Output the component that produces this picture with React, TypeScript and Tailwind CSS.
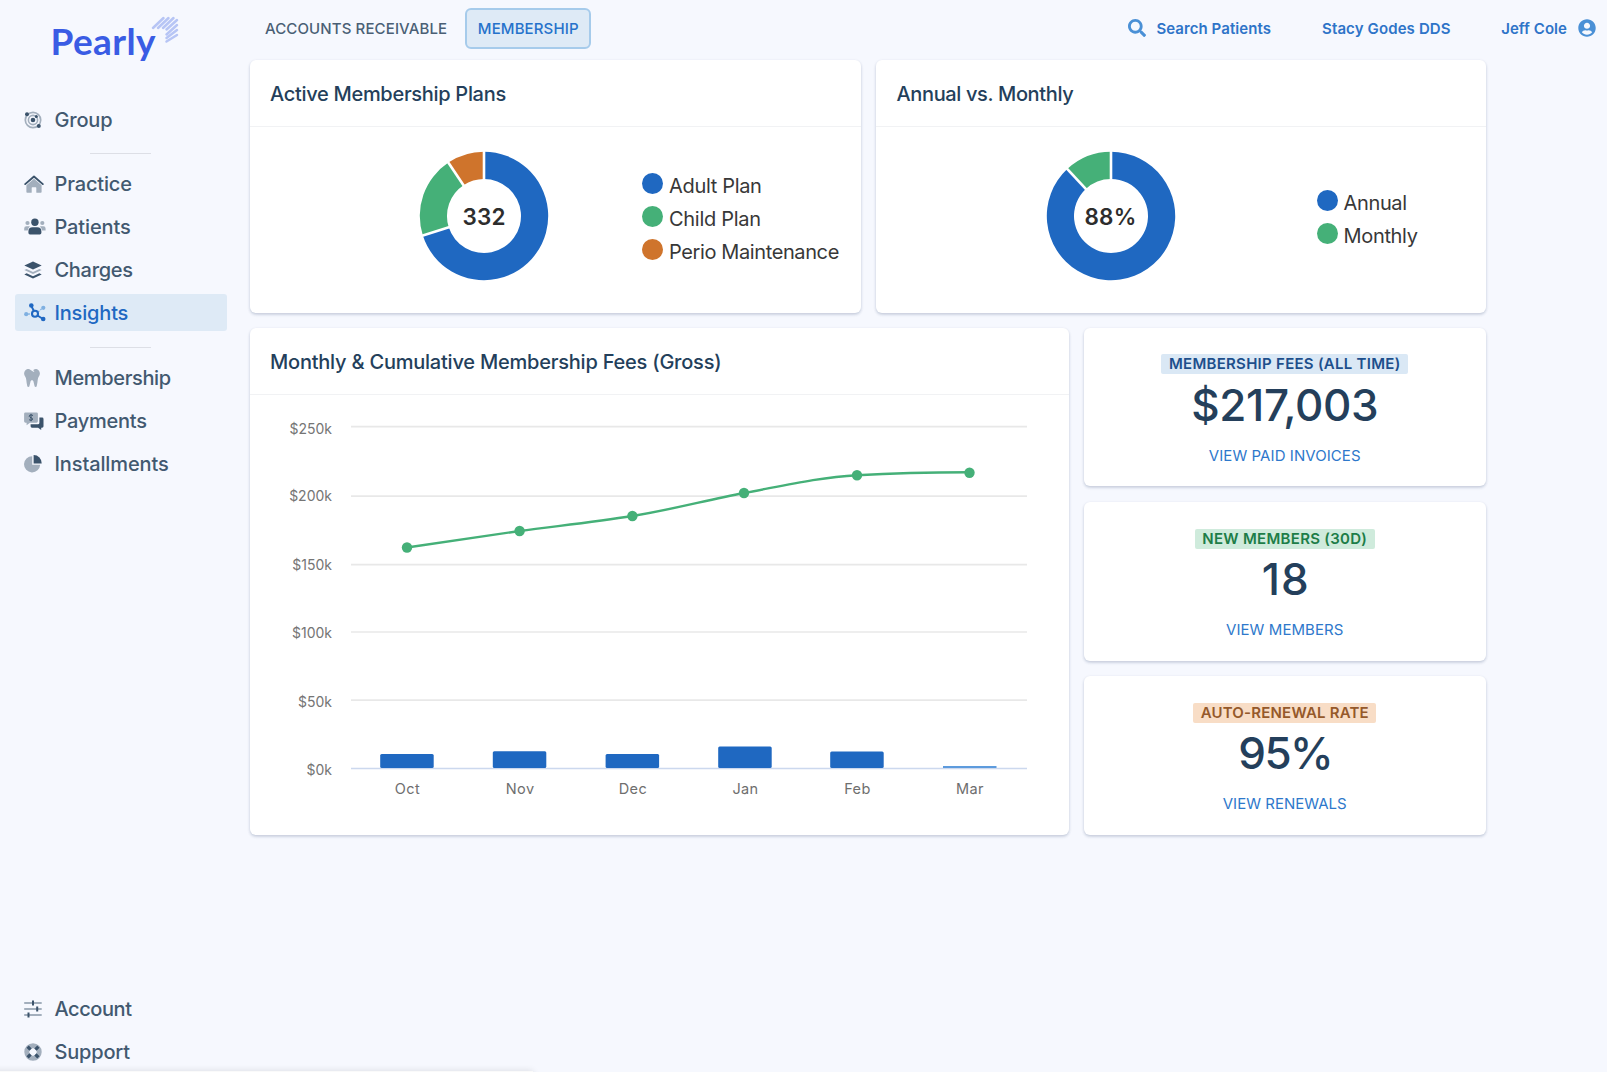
import type { ReactNode } from "react";
import { FaSearch, FaTooth, FaUserCircle } from "react-icons/fa";

const DARK = "#3b536b";
const SOFT = "#a3afbd";

function GroupIcon() {
  return (
    <svg width="18" height="18" viewBox="0 0 18 18" fill="none">
      <circle cx="9" cy="9" r="7.700" stroke={SOFT} strokeWidth="1.700" />
      <circle cx="9" cy="9" r="4.600" stroke={SOFT} strokeWidth="1.600" />
      <circle cx="9" cy="9" r="2.300" fill={DARK} />
      <circle cx="3" cy="3.200" r="2" fill={DARK} />
      <circle cx="12.300" cy="5.600" r="1.500" fill={DARK} />
      <circle cx="14.800" cy="15" r="2" fill={DARK} />
    </svg>
  );
}

function HomeIcon() {
  return (
    <svg width="20" height="18" viewBox="0 0 20 18" fill="none">
      <path d="M10 3.800 2.400 10.200V17q0 .8.8.8h3.900q.6 0 .6-.6v-4.400q0-.6.6-.6h3.400q.6 0 .6.6v4.400q0 .6.6.6h3.900q.8 0 .8-.8v-6.800Z" fill={SOFT} />
      <path d="M1.200 9.100 10 1.500l8.800 7.600" stroke={DARK} strokeWidth="1.900" strokeLinecap="round" strokeLinejoin="round" />
    </svg>
  );
}

function PeopleIcon() {
  return (
    <svg width="22" height="17" viewBox="0 0 22 17">
      <g fill={SOFT}>
        <circle cx="3.500" cy="5" r="2.100" />
        <circle cx="18.300" cy="5" r="2.100" />
        <path d="M.2 12.600V10.400q0-2.200 2.200-2.200h2.200q.8 0 1.400.4-2 1.300-2.300 4Z" />
        <path d="M21.600 12.600V10.400q0-2.200-2.200-2.200h-2.200q-.8 0-1.400.4 2 1.300 2.300 4Z" />
      </g>
      <g fill={DARK}>
        <circle cx="10.900" cy="4.300" r="3.700" />
        <path d="M4.400 14.800v-1.400q0-4.200 4.200-4.200h4.600q4.200 0 4.200 4.200v1.400q0 1.600-1.600 1.600H6q-1.600 0-1.600-1.600Z" />
      </g>
    </svg>
  );
}

function LayersIcon() {
  return (
    <svg width="18" height="18" viewBox="0 0 18 18">
      <path d="M.3 4.500 9 .4l8.700 4.100L9 8.600Z" fill={DARK} />
      <path d="m.3 9 2.300-1.100L9 10.900l6.400-3L17.700 9 9 13.100Z" fill={SOFT} />
      <path d="m.3 13.400 2.300-1.100L9 15.300l6.400-3 2.300 1.100L9 17.500Z" fill={DARK} />
    </svg>
  );
}

function InsightsIcon() {
  return (
    <svg width="22" height="19" viewBox="0 0 22 19" fill="none">
      <path d="M4 11h4M14 9l4-3.600" stroke="#8db9e5" strokeWidth="1.300" strokeDasharray="2 1" />
      <circle cx="2.200" cy="11.200" r="2.100" fill="#7fb0e1" />
      <circle cx="19.300" cy="4.800" r="2.100" fill="#7fb0e1" />
      <path d="m7.300 3 2.800 5.200M13.500 12.500l5.500 3.500" stroke="#2068c2" strokeWidth="1.900" />
      <circle cx="7.300" cy="2.500" r="2.300" fill="#2068c2" />
      <circle cx="19.200" cy="16" r="2.300" fill="#2068c2" />
      <circle cx="11" cy="10.800" r="3" stroke="#2068c2" strokeWidth="2.100" />
    </svg>
  );
}

function PaymentsIcon() {
  return (
    <svg width="20" height="18" viewBox="0 0 20 18">
      <path d="M1.500.4h11q1.400 0 1.400 1.400v7.500q0 1.400-1.400 1.400H6L2.600 13.200V10.700H1.500Q.1 10.700.1 9.300V1.800Q.1.400 1.500.4Z" fill={SOFT} />
      <path d="M15.400 5.600h2.700q1.400 0 1.400 1.400v7.300q0 1.400-1.400 1.400h-.9v2.200l-3.100-2.200H8q-1.400 0-1.400-1.400v-2.100h7.300q1.500 0 1.500-1.500Z" fill={DARK} />
      <path d="M9 3.500Q7 2.400 5.600 3.300q-1 1.100.4 1.900l1.800.8q1.400 1 .3 2-1.400.8-3-.3M7 1.900v7.300" stroke={DARK} strokeWidth="1" fill="none" />
    </svg>
  );
}

function PieIcon() {
  return (
    <svg width="18" height="18" viewBox="0 0 18 18">
      <path d="M8.200 1.200v8.600h8A8.100 8.100 0 1 1 8.200 1.200Z" fill={SOFT} />
      <path d="M9.600.1a8.100 8.100 0 0 1 8.100 8.300H9.600Z" fill={DARK} />
    </svg>
  );
}

function SlidersIcon() {
  return (
    <svg width="18" height="18" viewBox="0 0 18 18" strokeWidth="2">
      <path d="M.2 3h17.500M.2 9h17.500M.2 15h17.500" stroke={SOFT} />
      <path d="M9 .6v4.900M13.200 6.600v4.900M4.500 12.500v4.900" stroke={DARK} />
    </svg>
  );
}

function SupportIcon() {
  return (
    <svg width="18" height="18" viewBox="0 0 18 18" fill="none">
      <circle cx="9" cy="9" r="6.200" stroke={SOFT} strokeWidth="5" />
      <path d="m3.600 3.600 3 3m4.800 4.800 3 3m0-10.800-3 3m-4.800 4.800-3 3" stroke={DARK} strokeWidth="3.200" />
    </svg>
  );
}

type NavEntry = { label: string; icon: ReactNode; tracking: string; active?: boolean };

function NavItem({ label, icon, tracking, active }: NavEntry) {
  return (
    <a
      className={`flex h-[37px] items-center rounded-[3px] pl-[9px] text-[20px] font-medium ${
        active ? "bg-[#deeaf6] text-[#2068c2]" : "text-[#425970]"
      }`}
    >
      <span className="flex w-[30.500px] shrink-0">{icon}</span>
      <span className={tracking}>{label}</span>
    </a>
  );
}

function Divider() {
  return <div className="ml-[75px] h-px w-[61px] bg-[#dddfe6]" />;
}

function Logo() {
  return (
    <div className="ml-[35.500px] mt-[16px] flex h-[50px] items-start">
      <span className="mt-[2px] font-[Lato] text-[37px] font-bold leading-[46px] tracking-[0.400px] text-[#3a5ce4]">Pearly</span>
      <svg className="-ml-[4.500px]" width="28" height="28" viewBox="0 0 28 28" stroke="#b7c5f5" strokeWidth="2.500" strokeLinecap="round">
        <path d="M2 12 12.500 2M7 12 17.500 2M12 12 22.500 2M15.500 13.500 26 4M15.500 18.500 26 9M15.500 22 26 14M15.500 25.500 26 19" />
      </svg>
    </div>
  );
}

function Card({ title, className = "", children }: { title?: ReactNode; className?: string; children: ReactNode }) {
  return (
    <section className={`rounded-[6px] bg-white shadow-[0_1px_3px_rgba(60,80,120,0.180),0_2px_3px_rgba(60,80,120,0.120)] ${className}`}>
      {title && (
        <h2 className="flex h-[67px] items-center border-b border-[#f1f2f4] pl-[20.500px] pt-[2px] text-[20px] font-medium text-[#243f5b]">
          {title}
        </h2>
      )}
      {children}
    </section>
  );
}

const CENTER = 65;
function polar(r: number, deg: number) {
  const a = ((deg - 90) * Math.PI) / 180;
  return `${(CENTER + r * Math.cos(a)).toFixed(2)} ${(CENTER + r * Math.sin(a)).toFixed(2)}`;
}
function slice(from: number, to: number) {
  const large = to - from > 180 ? 1 : 0;
  return `M${polar(64.2, from)}A64.2 64.2 0 ${large} 1 ${polar(64.2, to)}L${polar(37, to)}A37 37 0 ${large} 0 ${polar(37, from)}Z`;
}

function Donut({ slices, children }: { slices: { from: number; to: number; color: string }[]; children: ReactNode }) {
  return (
    <div className="relative size-[130px]">
      <svg width="130" height="130" viewBox="0 0 130 130">
        {slices.map((s) => (
          <path key={s.color} d={slice(s.from, s.to)} fill={s.color} />
        ))}
        {slices.map((s) => (
          <path key={s.from} d={`M${polar(36, s.from)}L${polar(65, s.from)}`} stroke="#fff" strokeWidth="2.600" />
        ))}
      </svg>
      <div className="absolute inset-0 flex items-center justify-center pt-[2px] text-[22.500px] font-semibold text-[#2d2d2d]">
        {children}
      </div>
    </div>
  );
}

function Legend({ items }: { items: { label: string; color: string; tracking: string }[] }) {
  return (
    <ul>
      {items.map((i) => (
        <li key={i.label} className="flex h-[32.900px] items-center whitespace-nowrap text-[20px] text-[#383838]">
          <span className={`mb-[2px] mr-[6px] size-[21px] rounded-full ${i.color}`} />
          <span className={`pt-[2px] ${i.tracking}`}>{i.label}</span>
        </li>
      ))}
    </ul>
  );
}

const GRID = [
  { y: 426.700, base: 434, label: "$250k" },
  { y: 496.200, base: 501, label: "$200k" },
  { y: 564.700, base: 570, label: "$150k" },
  { y: 632, base: 638, label: "$100k" },
  { y: 700.200, base: 707, label: "$50k" },
  { y: 768.500, base: 774.500, label: "$0k" },
];
const MONTHS = [
  { label: "Oct", x: 407, bar: 754, dot: 547.500 },
  { label: "Nov", x: 519.600, bar: 751.200, dot: 531 },
  { label: "Dec", x: 632.400, bar: 754, dot: 516 },
  { label: "Jan", x: 745, bar: 746.400, dot: 493 },
  { label: "Feb", x: 857, bar: 751.400, dot: 475.200 },
  { label: "Mar", x: 969.500, bar: 766.200, dot: 472.700 },
];

function FeesChart() {
  return (
    <svg className="block" width="819" height="440" viewBox="250 395 819 440">
      {GRID.map((g, i) => (
        <g key={g.label}>
          <path d={`M351 ${g.y}H1027`} stroke={i === 5 ? "#ccd8ee" : "#e8e8e8"} strokeWidth="1.700" />
          <text x="332" y={g.base} textAnchor="end" fontSize="14" letterSpacing="0" fill="#757575">{g.label}</text>
        </g>
      ))}
      {MONTHS.map((m) => (
        <g key={m.label}>
          {m.label === "Mar" ? (
            <path d="M943 767h53.500" stroke="#5d9bdd" strokeWidth="2" />
          ) : (
            <rect x={m.x - 26.800} y={m.bar} width="53.500" height={768 - m.bar} rx="1.500" fill="#1f68c1" />
          )}
          <text x={m.x + 0.500} y="793.500" textAnchor="middle" fontSize="14.500" letterSpacing="0.400" fill="#6e6e6e">{m.label}</text>
        </g>
      ))}
      <path
        d="M407 547.500L519.600 531C557 526 595 522 632.400 516C670 510 707 500 744 493C782 486 819 477.200 857 475.200C895 473 932 472.300 969.500 472.300"
        fill="none" stroke="#45b078" strokeWidth="2.400"
      />
      {MONTHS.map((m) => (
        <circle key={m.label} cx={m.label === "Jan" ? 744 : m.x} cy={m.dot} r="5.200" fill="#45b078" />
      ))}
    </svg>
  );
}

type StatProps = { badge: string; badgeClass: string; value: string; valueClass: string; link: string; linkClass: string; className: string };
function Stat({ badge, badgeClass, value, valueClass, link, linkClass, className }: StatProps) {
  return (
    <Card className={className}>
      <div className="flex flex-col items-center">
        <div className={`flex h-[20px] items-center rounded-[2px] px-[7.500px] pt-px text-[15px] font-semibold ${badgeClass}`}>{badge}</div>
        <div className={`text-[44px] font-medium leading-[56px] text-[#243f5b] ${valueClass}`}>{value}</div>
        <a className={`mt-[13px] text-[15px] leading-[20px] text-[#2e78cb] ${linkClass}`}>{link}</a>
      </div>
    </Card>
  );
}

export default function App() {
  return (
    <div className="relative flex h-[1072px] w-[1607px] overflow-hidden bg-[#f6f8fe] font-[Inter,sans-serif]">
      <aside className="flex w-[249.500px] shrink-0 flex-col pl-[15px] pr-[22.500px]">
        <Logo />
        <nav className="mt-[35px]">
          <NavItem label="Group" icon={<GroupIcon />} tracking="tracking-[-0.180px]" />
        </nav>
        <div className="mt-[14.500px]"><Divider /></div>
        <nav className="mt-[11.500px] flex flex-col gap-[6px]">
          <NavItem label="Practice" icon={<HomeIcon />} tracking="tracking-[-0.150px]" />
          <NavItem label="Patients" icon={<PeopleIcon />} tracking="tracking-[-0.120px]" />
          <NavItem label="Charges" icon={<LayersIcon />} tracking="tracking-[-0.300px]" />
          <NavItem label="Insights" icon={<InsightsIcon />} tracking="tracking-[-0.180px]" active />
        </nav>
        <div className="mt-[16px]"><Divider /></div>
        <nav className="mt-[11px] flex flex-col gap-[6px]">
          <NavItem label="Membership" icon={<FaTooth className="h-[18px] w-[16px] text-[#a3afbd]" />} tracking="tracking-[-0.350px]" />
          <NavItem label="Payments" icon={<PaymentsIcon />} tracking="tracking-[-0.250px]" />
          <NavItem label="Installments" icon={<PieIcon />} tracking="tracking-[-0.120px]" />
        </nav>
        <nav className="mb-[2px] mt-auto flex flex-col gap-[6px]">
          <NavItem label="Account" icon={<SlidersIcon />} tracking="tracking-[-0.430px]" />
          <NavItem label="Support" icon={<SupportIcon />} tracking="tracking-[-0.200px]" />
        </nav>
      </aside>

      <div className="flex-1">
        <header className="flex h-[56px] items-center pr-[11px] text-[15px]">
          <a className="ml-[15.500px] pt-[2px] font-medium tracking-[0.120px] text-[#4a5f75]">ACCOUNTS RECEIVABLE</a>
          <a className="ml-[18px] flex h-[41px] w-[126px] items-center justify-center rounded-[6px] border-2 border-[#a6cbeb] bg-[#deeaf6] pt-[2px] font-medium tracking-[0.120px] text-[#2672cb]">
            MEMBERSHIP
          </a>
          <div className="ml-auto flex items-center font-semibold text-[#2e74c8]">
            <FaSearch className="mb-px size-[18px] text-[#4a90d6]" />
            <span className="ml-[10px] pt-[2px] tracking-[0.070px]">Search Patients</span>
            <span className="ml-[51px] pt-[2px] tracking-[0.120px]">Stacy Godes DDS</span>
            <span className="ml-[50.500px] pt-[2px] tracking-[0.050px]">Jeff Cole</span>
            <FaUserCircle className="mb-px ml-[11px] size-[18px] text-[#4a90d6]" />
          </div>
        </header>

        <main className="mt-[4px] w-[1236.500px]">
          <div className="flex gap-[15px]">
            <Card title={<span className="tracking-[-0.300px]">Active Membership Plans</span>} className="h-[253px] w-[611.500px]">
              <div className="flex pl-[169.500px] pt-[24px]">
                <Donut
                  slices={[
                    { from: 0, to: 252.300, color: "#1f68c1" },
                    { from: 252.300, to: 326.300, color: "#45b078" },
                    { from: 326.300, to: 360, color: "#cf742c" },
                  ]}
                >
                  <span className="tracking-[0.200px]">332</span>
                </Donut>
                <div className="ml-[93px] mt-[17.500px]">
                  <Legend
                    items={[
                      { label: "Adult Plan", color: "bg-[#1f68c1]", tracking: "tracking-[-0.330px]" },
                      { label: "Child Plan", color: "bg-[#45b078]", tracking: "tracking-[-0.300px]" },
                      { label: "Perio Maintenance", color: "bg-[#cf742c]", tracking: "tracking-[-0.390px]" },
                    ]}
                  />
                </div>
              </div>
            </Card>
            <Card title={<span className="tracking-[-0.360px]">Annual vs. Monthly</span>} className="h-[253px] flex-1">
              <div className="flex pl-[169.500px] pt-[24px]">
                <Donut
                  slices={[
                    { from: 0, to: 317, color: "#1f68c1" },
                    { from: 317, to: 360, color: "#45b078" },
                  ]}
                >
                  <span className="tracking-[0.200px]">88%</span>
                </Donut>
                <div className="ml-[141px] mt-[34.500px]">
                  <Legend
                    items={[
                      { label: "Annual", color: "bg-[#1f68c1]", tracking: "tracking-[-0.350px]" },
                      { label: "Monthly", color: "bg-[#45b078]", tracking: "tracking-[-0.330px]" },
                    ]}
                  />
                </div>
              </div>
            </Card>
          </div>

          <div className="mt-[15px] flex gap-[15px]">
            <Card title={<span className="tracking-[-0.220px]">Monthly &amp; Cumulative Membership Fees (Gross)</span>} className="h-[507px] w-[819px]">
              <FeesChart />
            </Card>
            <div className="flex flex-1 flex-col">
              <Stat
                className="h-[158px] pt-[26px]"
                badge="MEMBERSHIP FEES (ALL TIME)" badgeClass="bg-[#dae8f5] text-[#1d4f8c] tracking-[0.280px]"
                value="$217,003" valueClass="mt-[3px] tracking-[-0.350px]"
                link="VIEW PAID INVOICES" linkClass="tracking-[0.070px]"
              />
              <Stat
                className="mt-[16px] h-[159px] pt-[26.500px]"
                badge="NEW MEMBERS (30D)" badgeClass="bg-[#cfebdc] text-[#1d7d48] tracking-[0.290px]"
                value="18" valueClass="mt-[2.500px] pl-[2px] tracking-[1px]"
                link="VIEW MEMBERS" linkClass="tracking-[0.070px]"
              />
              <Stat
                className="mt-[15px] h-[159px] pt-[26.500px]"
                badge="AUTO-RENEWAL RATE" badgeClass="bg-[#f8ddc6] text-[#95592a] tracking-[0.200px]"
                value="95%" valueClass="mt-[2.500px] pl-px tracking-[-1.600px]"
                link="VIEW RENEWALS" linkClass="tracking-[0.020px]"
              />
            </div>
          </div>
        </main>
      </div>

      <div className="absolute -left-[10px] top-[1071px] h-[10px] w-[543px] bg-[#fafafa] shadow-[0_0_7px_rgba(0,0,0,0.120)]" />
    </div>
  );
}
